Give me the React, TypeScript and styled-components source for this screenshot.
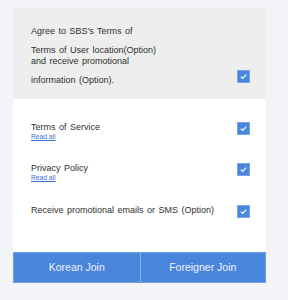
import React from "react";
import styled, { createGlobalStyle } from "styled-components";

const Global = createGlobalStyle`
  html, body { margin: 0; padding: 0; background: #f3f4f8; }
  body { font-family: "Liberation Sans", Arial, sans-serif; }
`;

const Page = styled.div`
  width: 288px;
  height: 300px;
  padding: 8px 0 0 13px;
  box-sizing: border-box;
`;

const Card = styled.div`
  width: 253px;
  display: flex;
  flex-direction: column;
  background: #ffffff;
`;

const Intro = styled.section`
  background: #eeeeee;
  padding: 17px 16px 13px 18px;
  display: flex;
  flex-direction: column;
`;

const Text = styled.div<{ $lh?: number; $mt?: number }>`
  font-size: 9px;
  word-spacing: 1px;
  color: #2f2f2f;
  line-height: ${(p) => p.$lh ?? 12}px;
  margin-top: ${(p) => p.$mt ?? 0}px;
`;

const AgreeRow = styled.div`
  display: flex;
  align-items: flex-end;
  justify-content: space-between;
  margin-top: 2.5px;
`;

const List = styled.section`
  padding: 22px 16px 28px 18px;
  display: flex;
  flex-direction: column;
  gap: 21.5px;
`;

const Item = styled.div`
  display: flex;
  align-items: flex-start;
  justify-content: space-between;
  min-height: 20px;
`;

const Labels = styled.div`
  display: flex;
  flex-direction: column;
`;

const ReadAll = styled.a`
  font-size: 6.7px;
  line-height: 8px;
  color: #3b6fd2;
  text-decoration: underline;
  cursor: pointer;
`;

const Box = styled.span<{ $mb?: number; $mt?: number }>`
  width: 13px;
  height: 13px;
  box-sizing: border-box;
  background: #4a86dc;
  border: 1px solid #78a5e6;
  display: flex;
  align-items: center;
  justify-content: center;
  flex-shrink: 0;
  margin-bottom: ${(p) => p.$mb ?? 0}px;
  margin-top: ${(p) => p.$mt ?? 0}px;
`;

const Buttons = styled.div`
  display: grid;
  grid-template-columns: 1fr 1fr;
  height: 31px;
  background: #4a85dc;
  border: 1px solid #6f9ee4;
  box-sizing: border-box;
`;

const JoinButton = styled.button<{ $divider?: boolean }>`
  border: none;
  border-left: ${(p) => (p.$divider ? "1px solid #8db0ea" : "none")};
  background: transparent;
  color: #eef3fc;
  font-family: "Liberation Sans", Arial, sans-serif;
  font-size: 10.5px;
  padding: 0;
  cursor: pointer;
`;

const Check = ({ mb, mt }: { mb?: number; mt?: number }) => (
  <Box $mb={mb} $mt={mt}>
    <svg width="9" height="9" viewBox="0 0 9 9">
      <path d="M1.8 4.6 L3.7 6.4 L7.2 2.6" fill="none" stroke="#ffffff" strokeWidth="1.2" />
    </svg>
  </Box>
);

export default function App() {
  return (
    <>
      <Global />
      <Page>
        <Card>
          <Intro>
            <Text>Agree to SBS's Terms of</Text>
            <Text $lh={11} $mt={8}>
              Terms of User location(Option)
              <br />
              and receive promotional
            </Text>
            <AgreeRow>
              <Text>information (Option).</Text>
              <Check mb={3} />
            </AgreeRow>
          </Intro>
          <List>
            <Item>
              <Labels>
                <Text>Terms of Service</Text>
                <ReadAll>Read all</ReadAll>
              </Labels>
              <Check mt={1} />
            </Item>
            <Item>
              <Labels>
                <Text>Privacy Policy</Text>
                <ReadAll>Read all</ReadAll>
              </Labels>
              <Check mt={1} />
            </Item>
            <Item>
              <Labels>
                <Text>Receive promotional emails or SMS (Option)</Text>
              </Labels>
              <Check mt={1} />
            </Item>
          </List>
          <Buttons>
            <JoinButton>Korean Join</JoinButton>
            <JoinButton $divider>Foreigner Join</JoinButton>
          </Buttons>
        </Card>
      </Page>
    </>
  );
}
